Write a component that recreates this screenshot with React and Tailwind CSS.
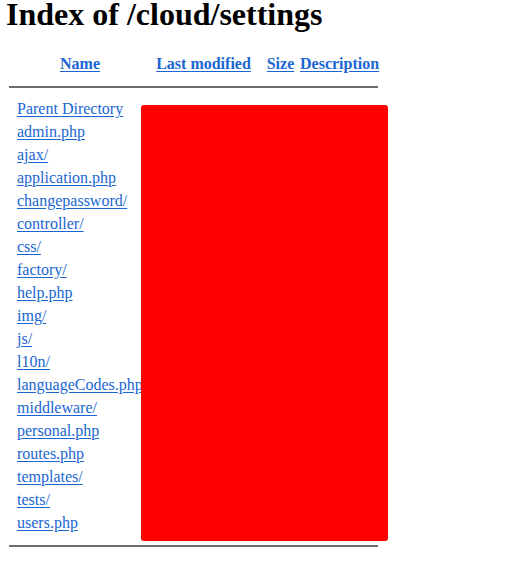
import React from 'react';

const files = [
  'Parent Directory',
  'admin.php',
  'ajax/',
  'application.php',
  'changepassword/',
  'controller/',
  'css/',
  'factory/',
  'help.php',
  'img/',
  'js/',
  'l10n/',
  'languageCodes.php',
  'middleware/',
  'personal.php',
  'routes.php',
  'templates/',
  'tests/',
  'users.php',
];

const link = 'text-[#1a66d2] underline underline-offset-2';

const App = () => {
  return (
    <div className="relative flow-root min-h-[566px] bg-white px-2 font-['Liberation_Serif',serif] text-black">
      <h1 className="-mt-[4px] -ml-[2px] text-[32px] leading-[37px] font-bold">Index of /cloud/settings</h1>

      {/* Header row */}
      <div className="mt-[21px] ml-[9px] flex h-[20px] items-center text-[16px] font-bold">
        <div className="w-[126px] text-center">
          <a href="#" className={link}>Name</a>
        </div>
        <div className="ml-[3px] w-[115px] text-center">
          <a href="#" className={link}>Last modified</a>
        </div>
        <div className="ml-[3px] w-[33px] text-center">
          <a href="#" className={link}>Size</a>
        </div>
        <div className="ml-[3px] w-[78px] text-center">
          <a href="#" className={link}>Description</a>
        </div>
      </div>

      <div className="mt-[12px] ml-[1px] w-[369px] border-t-2 border-[#6e6e6e]" />

      {/* Listing */}
      <div className="mt-[9px] ml-[9px] flex flex-col text-[16px]">
        {files.map(name => (
          <div key={name} className="flex h-[23px] items-center">
            <a href="#" className={link}>{name}</a>
          </div>
        ))}
      </div>

      <div className="mt-[11px] ml-[1px] w-[369px] border-t-2 border-[#6e6e6e]" />

      {/* Redaction overlay */}
      <div className="absolute top-[105px] left-[141px] h-[436px] w-[247px] rounded-[3px] bg-[#ff0000]" />
    </div>
  );
};

export default App;
